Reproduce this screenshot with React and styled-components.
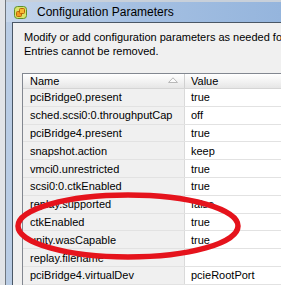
import React from 'react';
import styled, { createGlobalStyle } from 'styled-components';

const params = [
  { name: 'pciBridge0.present', value: 'true' },
  { name: 'sched.scsi0:0.throughputCap', value: 'off' },
  { name: 'pciBridge4.present', value: 'true' },
  { name: 'snapshot.action', value: 'keep' },
  { name: 'vmci0.unrestricted', value: 'true' },
  { name: 'scsi0:0.ctkEnabled', value: 'true' },
  { name: 'replay.supported', value: 'false' },
  { name: 'ctkEnabled', value: 'true' },
  { name: 'unity.wasCapable', value: 'true' },
  { name: 'replay.filename', value: '' },
  { name: 'pciBridge4.virtualDev', value: 'pcieRootPort' },
];

const GlobalStyle = createGlobalStyle`
  html, body {
    margin: 0;
    padding: 0;
    background: #f0f0f0;
  }
  body {
    font-family: "Liberation Sans", Arial, sans-serif;
  }
`;

const AppIcon = () => (
  <svg width="13" height="13" viewBox="0 0 13 13">
    <rect x="0.5" y="0.5" width="12" height="12" rx="3" fill="#d8e36a" stroke="#5f8f2a" />
    <rect x="2.5" y="5.5" width="5" height="5" rx="1" fill="#f29a1c" stroke="#b8650a" />
    <rect x="5.5" y="2.5" width="5" height="5" rx="1" fill="#f7b733" stroke="#b8650a" />
  </svg>
);

const SortArrow = () => (
  <svg width="10" height="6" viewBox="0 0 10 6">
    <path d="M0.5 5.5 L5 0.8 L9.5 5.5 Z" fill="#fbfbfb" stroke="#b8b8b8" />
  </svg>
);

const App = () => {
  return (
    <>
      <GlobalStyle />
      <Screen>
        <OuterEdge />
        <Frame>
          <TitleBar>
            <AppIcon />
            <Title>Configuration Parameters</Title>
          </TitleBar>
          <FrameBody>
            <Content>
              <Intro>
                Modify or add configuration parameters as needed for experimental features.
                <br />
                Entries cannot be removed.
              </Intro>
              <Grid>
                <HeaderRow>
                  <HeaderCell>
                    Name
                    <SortArrow />
                  </HeaderCell>
                  <HeaderCell>Value</HeaderCell>
                </HeaderRow>
                {params.map(p => (
                  <Row key={p.name}>
                    <NameCell>{p.name}</NameCell>
                    <ValueCell>{p.value}</ValueCell>
                  </Row>
                ))}
              </Grid>
            </Content>
          </FrameBody>
        </Frame>
        <Annotation viewBox="0 0 281 285" width="281" height="285">
          <ellipse cx="128" cy="226" rx="110" ry="31" fill="none" stroke="#e5131c" strokeWidth="5.5" />
        </Annotation>
      </Screen>
    </>
  );
};

const Screen = styled.div`
  position: relative;
  width: 281px;
  height: 285px;
  overflow: hidden;
  display: flex;
`;

const OuterEdge = styled.div`
  width: 5px;
  flex-shrink: 0;
  background: #e2e4e7;
  border-right: 1px solid #6f767e;
`;

const Frame = styled.div`
  flex: 1;
  display: flex;
  flex-direction: column;
  min-width: 0;
  background: linear-gradient(to right, #c6d6ea, #a5c0e2 45%, #95b5dd);
`;

const TitleBar = styled.div`
  height: 22px;
  flex-shrink: 0;
  display: flex;
  align-items: center;
  gap: 10px;
  padding-left: 8px;
  box-sizing: border-box;
  border-top: 2px solid #c8d0da;
`;

const Title = styled.span`
  font-size: 12px;
  color: #000;
  white-space: nowrap;
`;

const FrameBody = styled.div`
  flex: 1;
  display: flex;
  padding-left: 6px;
  min-height: 0;
  background: #b9cce4;
`;

const Content = styled.div`
  flex: 1;
  min-width: 0;
  background: #f0f0f0;
  border-left: 1px solid #4a5766;
  border-top: 1px solid #4a5766;
  padding: 7px 0 0 9px;
`;

const Intro = styled.p`
  margin: 0 0 15px 2px;
  font-size: 11px;
  line-height: 14px;
  color: #000;
  white-space: nowrap;
`;

const Grid = styled.div`
  width: 300px;
  border: 1px solid #828790;
  background: #fff;
`;

const HeaderRow = styled.div`
  display: grid;
  grid-template-columns: 161px 1fr;
  height: 14px;
  border-bottom: 1px solid #d5d5d5;
  background: linear-gradient(#ffffff, #f3f3f3 50%, #e6e6e6);
`;

const HeaderCell = styled.div`
  display: flex;
  align-items: center;
  justify-content: space-between;
  padding: 0 6px 0 7px;
  font-size: 11px;
  color: #000;
  & + & {
    border-left: 1px solid #d0d0d0;
    padding-left: 6px;
  }
  svg {
    margin-bottom: 2px;
  }
`;

const Row = styled.div`
  display: grid;
  grid-template-columns: 161px 1fr;
  height: 17.8px;
  box-sizing: border-box;
  border-bottom: 1px solid #e2e2e2;
`;

const NameCell = styled.div`
  display: flex;
  align-items: center;
  padding-left: 7px;
  background: #f0f0f0;
  font-size: 11px;
  color: #000;
  white-space: nowrap;
  overflow: hidden;
`;

const ValueCell = styled.div`
  display: flex;
  align-items: center;
  padding-left: 6px;
  border-left: 1px solid #dadada;
  background: #fff;
  font-size: 11px;
  color: #000;
  white-space: nowrap;
`;

const Annotation = styled.svg`
  position: absolute;
  left: 0;
  top: 0;
  pointer-events: none;
`;

export default App;
